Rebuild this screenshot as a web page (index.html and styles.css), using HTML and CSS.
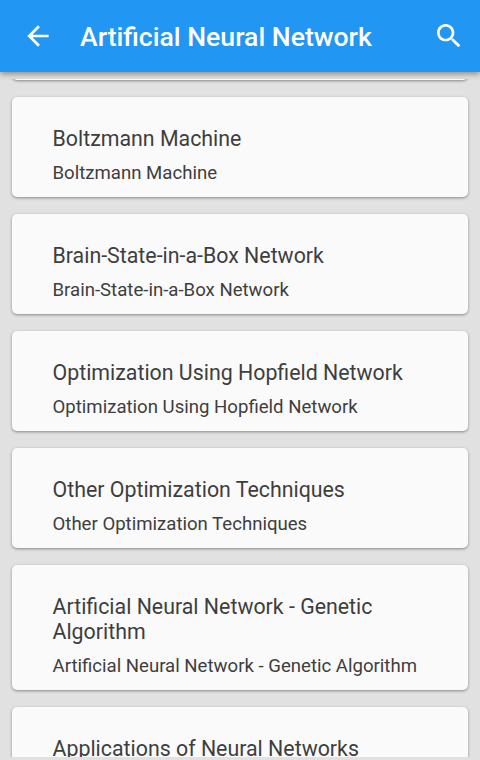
FILE: index.html
```html
<!DOCTYPE html>
<html lang="en">
<head>
    <meta charset="UTF-8">
    <meta name="viewport" content="width=device-width, initial-scale=1.0">
    <title>Artificial Neural Network</title>
    <link rel="stylesheet" href="styles.css">
</head>
<body>
    <div class="app">
        <header class="toolbar">
            <svg class="icon" viewBox="0 0 24 24"><path d="M20 11H7.83l5.59-5.59L12 4l-8 8 8 8 1.41-1.41L7.83 13H20v-2z"/></svg>
            <h1>Artificial Neural Network</h1>
            <svg class="icon" viewBox="0 0 24 24"><path d="M15.5 14h-.79l-.28-.27C15.41 12.59 16 11.11 16 9.5 16 5.91 13.09 3 9.5 3S3 5.91 3 9.5 5.91 16 9.5 16c1.61 0 3.09-.59 4.23-1.57l.27.28v.79l5 4.99L20.49 19l-4.99-5zm-6 0C7.01 14 5 11.99 5 9.5S7.01 5 9.5 5 14 7.01 14 9.5 11.99 14 9.5 14z"/></svg>
        </header>

        <main class="list">
            <div class="card card-prev"></div>
            <div class="card">
                <h2>Boltzmann Machine</h2>
                <p>Boltzmann Machine</p>
            </div>
            <div class="card">
                <h2>Brain-State-in-a-Box Network</h2>
                <p>Brain-State-in-a-Box Network</p>
            </div>
            <div class="card">
                <h2>Optimization Using Hopfield Network</h2>
                <p>Optimization Using Hopfield Network</p>
            </div>
            <div class="card">
                <h2>Other Optimization Techniques</h2>
                <p>Other Optimization Techniques</p>
            </div>
            <div class="card">
                <h2>Artificial Neural Network - Genetic Algorithm</h2>
                <p>Artificial Neural Network - Genetic Algorithm</p>
            </div>
            <div class="card card-next">
                <h2>Applications of Neural Networks</h2>
            </div>
        </main>
    </div>
</body>
</html>
```

FILE: styles.css
```css
* { margin: 0; padding: 0; box-sizing: border-box; }
body {
    font-family: Roboto, sans-serif;
    background: #e1e1e1;
    color: #3e3e3e;
}
.app {
    height: 760px;
    padding-bottom: 3px;
    display: flex;
    flex-direction: column;
    overflow: hidden;
}
.toolbar {
    flex: none;
    height: 72px;
    margin-bottom: 7px;
    padding: 0 15.5px 0 21.5px;
    display: flex;
    align-items: center;
    background: #2196f3;
    color: #fff;
    box-shadow: 0 2px 6px rgba(0, 0, 0, 0.4);
}
.toolbar h1 {
    flex: 1;
    margin-left: 26.5px;
    font-size: 26.6px;
    font-weight: 500;
    white-space: nowrap;
}
.icon {
    width: 32px;
    height: 32px;
    fill: currentColor;
}
.list {
    flex: 1;
    min-height: 0;
    padding: 0 12px;
    overflow: hidden;
}
.card {
    margin-bottom: 17px;
    padding: 29px 40px 13px 40.5px;
    background: #fafafa;
    border-radius: 5px;
    box-shadow: 0 1px 3px rgba(0, 0, 0, 0.4);
}
/* bottom edge of the card scrolled under the toolbar */
.card-prev {
    height: 10px;
    margin-top: -9px;
    padding: 0;
}
.card-next {
    margin-bottom: 0;
    padding-bottom: 0;
}
.card h2 {
    font-size: 21.35px;
    font-weight: 400;
    line-height: 25px;
}
.card p {
    margin-top: 11px;
    font-size: 18.6px;
    line-height: 22px;
    white-space: nowrap;
}
```
